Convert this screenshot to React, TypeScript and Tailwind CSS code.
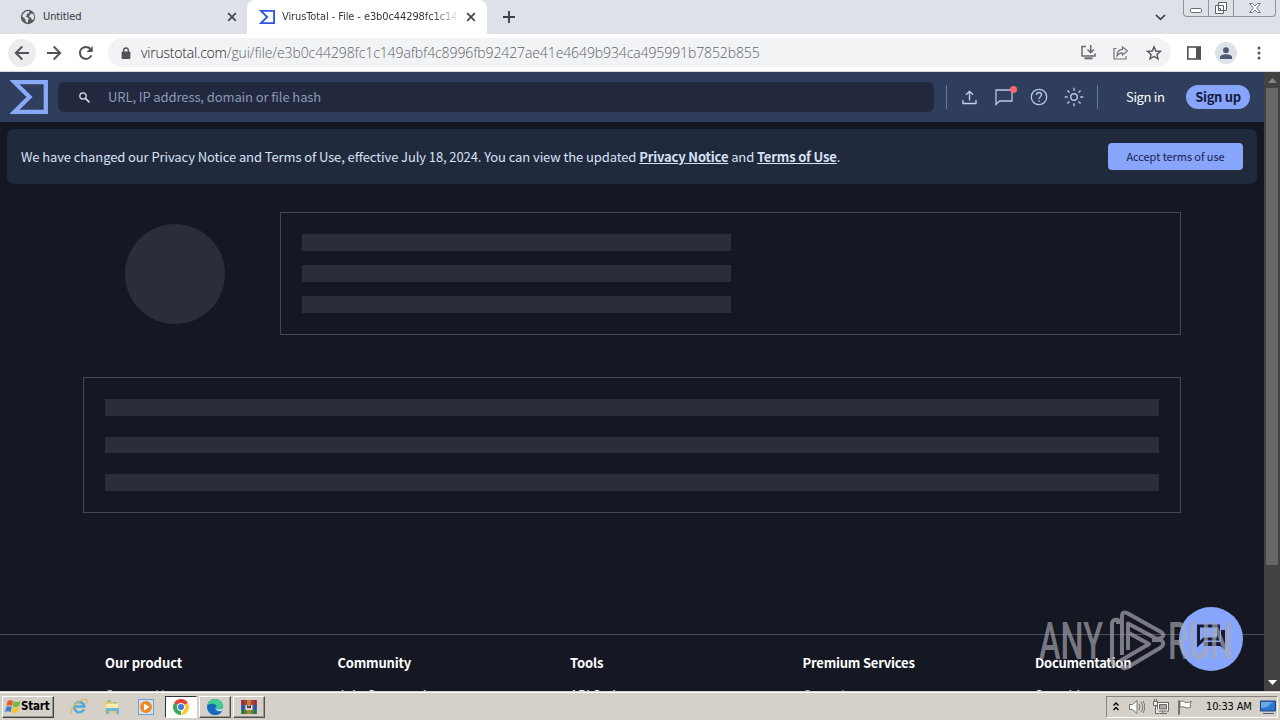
import type { ReactNode } from "react";

const pageFont = "font-['Noto_Sans_CJK_JP','Noto_Sans',sans-serif]";
const uiFont = "font-['DejaVu_Sans_Condensed','DejaVu_Sans',sans-serif]";

function Globe() {
  return (
    <svg className="h-4 w-4" viewBox="0 0 16 16">
      <circle cx="8" cy="8" r="7.2" fill="#55585d" />
      <path d="M3 5 6 2.2 9.5 2 8.8 4.2 6.8 5 7 6.5 5.3 7.2 7.5 8.2 9 9.6 8 11.6 7.6 14 5.6 12.4 5.2 10 2.2 7.6ZM11 4.4l2.4.5.8 2.6-.5 3-1.8.4-.8-2.2-1.8-.6.3-2Z" fill="#dee1e6" />
    </svg>
  );
}

function Cross() {
  return (
    <svg className="h-[10px] w-[10px]" viewBox="0 0 10 10">
      <path d="M1.2 1.2 8.8 8.8M8.8 1.2 1.2 8.8" stroke="#45484d" strokeWidth="1.8" />
    </svg>
  );
}

function Sigma({ className, stroke, width }: { className: string; stroke: string; width: number }) {
  return (
    <svg className={className} viewBox="0 0 38 34" preserveAspectRatio="none">
      <path d="M4.5 2.200H35.800V31.800H4.500L19.500 17Z" fill="none" stroke={stroke} strokeWidth={width} strokeMiterlimit="10" />
    </svg>
  );
}

function TabStrip() {
  return (
    <div className="flex h-[34px] bg-[#dee1e8]">
      <div className="flex w-[247px] items-center pl-5">
        <Globe />
        <span className="ml-[7px] flex-1 pt-px text-[11px] tracking-[-0.1px] text-[#33363b]">Untitled</span>
        <span className="mr-[10px]"><Cross /></span>
      </div>
      <div className="flex h-full w-[240px] items-center rounded-t-lg bg-white pl-3">
        <Sigma className="h-[14px] w-4" stroke="#2f55e4" width={4.4} />
        <span className="ml-[7px] w-[177px] overflow-hidden whitespace-nowrap pt-px text-[11px] tracking-[-0.1px] text-[#33363b] [mask-image:linear-gradient(to_right,#000_150px,transparent_177px)]">
          VirusTotal - File - e3b0c44298fc1c149
        </span>
        <span className="ml-[7px]"><Cross /></span>
      </div>
      <div className="flex items-center pl-4">
        <svg className="h-[12px] w-[12px]" viewBox="0 0 12 12"><path d="M6 0v12M0 6h12" stroke="#3c3f44" strokeWidth="1.9" /></svg>
      </div>
      <div className="ml-auto flex items-center pr-[17px]">
        <svg className="h-[7px] w-[11px]" viewBox="0 0 11 7"><path d="m1 1 4.500 4.400L10 1" fill="none" stroke="#3c3f44" strokeWidth="1.700" /></svg>
      </div>
      <div className="mr-1 flex h-[17px] w-[93px] rounded-b-[4px] border border-t-0 border-[#8e939b]">
        <div className="flex w-[25px] justify-center border-r border-[#8e939b]">
          <svg className="h-4 w-3" viewBox="0 0 12 16"><rect x=".5" y="8.500" width="11" height="4" rx="1" fill="#fff" stroke="#666b73" /></svg>
        </div>
        <div className="flex w-[25px] justify-center border-r border-[#8e939b]">
          <svg className="h-4 w-[14px]" viewBox="0 0 14 16" fill="#fff" stroke="#5e636b">
            <path d="M4.500 2.500h8v8h-8zM1.500 5.500h8v8h-8zM4.500 8.500h2v2h-2z" />
          </svg>
        </div>
        <div className="flex flex-1 justify-center">
          <svg className="h-4 w-3" viewBox="0 0 12 16"><path d="M.7 3.500h3L6 6l2.300-2.500h3L7.700 8l3.600 4.500h-3L6 10l-2.300 2.500h-3L4.300 8Z" fill="#fff" stroke="#666b73" strokeWidth=".9" /></svg>
        </div>
      </div>
    </div>
  );
}

function Toolbar() {
  return (
    <div className="flex h-[38px] items-center border-b border-[#cfd8e4] bg-white pl-2">
      <div className="flex h-7 w-7 items-center justify-center rounded-full bg-[#ececed]">
        <svg className="h-4 w-4" viewBox="0 0 16 16" fill="none" stroke="#505357" strokeWidth="1.9"><path d="M15 8H2M8.300 1.500 1.800 8l6.500 6.500" /></svg>
      </div>
      <svg className="ml-[10px] h-4 w-4" viewBox="0 0 16 16" fill="none" stroke="#505357" strokeWidth="1.9"><path d="M1 8h13M7.700 1.500 14.200 8l-6.500 6.500" /></svg>
      <svg className="ml-4 h-4 w-4" viewBox="0 0 16 16"><path d="M13.400 10.400A6 6 0 1 1 12.500 4" fill="none" stroke="#505357" strokeWidth="2" /><path d="M14.700.9v6.200H8.500Z" fill="#505357" /></svg>
      <div className="ml-[14px] flex h-[29px] w-[1063px] items-center rounded-full bg-[#f1f3f5] pl-[13px]">
        <svg className="h-3 w-[10px]" viewBox="0 0 10 12"><path d="M2.700 5V3.300a2.300 2.300 0 0 1 4.600 0V5" fill="none" stroke="#505357" strokeWidth="1.400" /><rect x=".6" y="4.500" width="8.800" height="7.500" rx="1" fill="#505357" /></svg>
        <span className="ml-[10px] whitespace-nowrap font-['Open_Sans',sans-serif] text-[14px] font-light tracking-[-0.1px] text-[#5f6368]">
          <span className="tracking-[-0.2px] text-[#1f2023]">virustotal.com</span>/gui/file/e3b0c44298fc1c149afbf4c8996fb92427ae41e4649b934ca495991b7852b855
        </span>
        <div className="ml-auto flex items-center gap-[17px] pr-[9px]">
          <svg className="h-[15px] w-[15px]" viewBox="0 0 15 15" fill="none" stroke="#65686d" strokeWidth="1.500"><path d="M5 1.500H1v9.500h13V8.500M9.700 0v7M6.500 4.500l3.200 3.200 3.200-3.200" /><path d="M3.500 13.300h8" strokeWidth="2" /></svg>
          <svg className="h-[15px] w-[16px]" viewBox="0 0 16 15" fill="none" stroke="#707378" strokeWidth="1.200"><path d="M3.500 3.500H1v10.500h12v-3M9.500 2l5 4-5 4V7.800C6.500 7.800 5.200 9 4 11c0-4 2-6.500 5.500-6.700Z" /></svg>
          <svg className="h-4 w-4" viewBox="0 0 16 16" fill="none" stroke="#55585d" strokeWidth="1.400"><path d="m8 1.800 1.800 4.200 4.700.4-3.600 3 1.100 4.500L8 11.500l-4 2.400 1.100-4.500-3.600-3L6.200 6Z" /></svg>
        </div>
      </div>
      <svg className="ml-4 h-[14px] w-[14px]" viewBox="0 0 14 14"><rect x=".8" y="1" width="12.400" height="12" fill="#fff" stroke="#505357" strokeWidth="1.600" /><path d="M9 1h4.500v12H9z" fill="#505357" /></svg>
      <div className="ml-[14px] flex h-[22px] w-[22px] items-center justify-center rounded-full bg-[#dde1e8]">
        <svg className="h-3 w-3" viewBox="0 0 12 12" fill="#4d5a70"><circle cx="6" cy="3.200" r="2.900" /><path d="M0 12V9.800C0 8 4 7.200 6 7.200s6 .8 6 2.600V12Z" /></svg>
      </div>
      <svg className="ml-5 h-[14px] w-[4px]" viewBox="0 0 4 14" fill="#505357"><circle cx="2" cy="2" r="1.500" /><circle cx="2" cy="7" r="1.500" /><circle cx="2" cy="12" r="1.500" /></svg>
    </div>
  );
}

function SiteHeader() {
  return (
    <header className="flex h-[50px] shrink-0 items-center bg-[#2e3e5c] pl-[10px]">
      <Sigma className="h-[34px] w-[38px]" stroke="#8aaaf9" width={4.3} />
      <div className="ml-[10px] flex h-[30px] w-[876px] items-center rounded-[6px] bg-[#22293f] pl-[21px]">
        <svg className="h-[11px] w-[11px]" viewBox="0 0 11 11" fill="none" stroke="#dfe5f0"><circle cx="4" cy="4" r="3.200" strokeWidth="1.200" /><path d="m6.400 6.400 4 4" strokeWidth="1.500" /></svg>
        <span className="ml-[18px] pb-[2px] text-[13px] leading-none tracking-[-0.1px] text-[#8c9ab3]">URL, IP address, domain or file hash</span>
      </div>
      <div className="ml-3 h-6 w-px bg-[#60789f]" />
      <svg className="ml-[15px] h-[15px] w-[15px]" viewBox="0 0 15 15" fill="none" stroke="#c3d2ee" strokeWidth="1.300"><path d="M1 10v3.500h13V10M7.500 10.500V1.500M4 4.800l3.500-3.500L11 4.800" /></svg>
      <div className="relative ml-[18px] h-[18px] w-[18px]">
        <svg className="h-[18px] w-[18px]" viewBox="0 0 18 18" fill="none" stroke="#b6c7e7" strokeWidth="1.300"><path d="M1 16.500V2h16v11H4.500Z" /></svg>
        <span className="absolute -right-[4px] -top-[2px] h-[7px] w-[7px] rounded-full bg-[#ff6673]" />
      </div>
      <svg className="ml-[17px] h-[18px] w-[18px]" viewBox="0 0 18 18" fill="none" stroke="#b6c7e7" strokeWidth="1.300"><circle cx="9" cy="9" r="7.700" /><path d="M6.500 7c0-1.600 1.100-2.500 2.500-2.500s2.500.9 2.500 2.300C11.500 8.600 9 8.800 9 11M9 12.200v1.500" /></svg>
      <svg className="ml-4 h-5 w-5" viewBox="0 0 20 20" fill="none" stroke="#b6c7e7" strokeWidth="1.400"><circle cx="10" cy="10" r="3.300" /><path d="M10 .7v3M10 16.300v3M.7 10h3M16.300 10h3M3.400 3.400l2.100 2.100M14.500 14.500l2.100 2.100M3.400 16.600l2.100-2.100M14.500 5.500l2.100-2.100" /></svg>
      <div className="ml-[13px] h-6 w-px bg-[#60789f]" />
      <span className="ml-7 w-[60px] whitespace-nowrap pb-[2px] text-[13px] leading-none tracking-[-0.35px] text-white">Sign in</span>
      <span className="flex h-6 w-16 items-center justify-center whitespace-nowrap rounded-full bg-[#87a5fb] pb-[2px] text-[13px] font-bold leading-none tracking-[-0.32px] text-[#141b3d]">Sign up</span>
    </header>
  );
}

function Notice() {
  return (
    <div className="mx-[7px] mt-[7px] flex h-[55px] shrink-0 items-center justify-between rounded-[7px] bg-[#21293d] pl-[14px] pr-[14px]">
      <p className="whitespace-nowrap text-[13px] leading-none tracking-[-0.1px] text-[#d6e2f6]">
        We have changed our Privacy Notice and Terms of Use, effective July 18, 2024. You can view the updated{" "}
        <b className="tracking-[-0.16px] underline">Privacy Notice</b> and <b className="tracking-[-0.16px] underline">Terms of Use</b>.
      </p>
      <div className="flex h-[27px] w-[135px] items-center justify-center rounded-[4px] bg-[#87a5fb] text-[11px] leading-none tracking-[-0.07px] text-[#18234d]">Accept terms of use</div>
    </div>
  );
}

function Skeletons() {
  return (
    <>
      <div className="ml-[125px] mt-7 flex h-[123px] shrink-0">
        <div className="mt-3 h-[100px] w-[100px] rounded-full bg-[#2c2d3a]" />
        <div className="ml-[55px] flex w-[901px] flex-col gap-[14px] border border-[#454759] px-[21px] pt-[21px]">
          <div className="h-[17px] w-[429px] bg-[#2c2d3a]" />
          <div className="h-[17px] w-[429px] bg-[#2c2d3a]" />
          <div className="h-[17px] w-[429px] bg-[#2c2d3a]" />
        </div>
      </div>
      <div className="ml-[83px] mt-[42px] flex h-[136px] w-[1098px] shrink-0 flex-col justify-between border border-[#454759] px-[21px] pb-[21px] pt-[21px]">
        <div className="h-[17px] bg-[#2c2d3a]" />
        <div className="h-4 bg-[#2c2d3a]" />
        <div className="h-[17px] bg-[#2c2d3a]" />
      </div>
    </>
  );
}

const columns = [
  ["Our product", "tracking-[-0.05px]", "Contact Us", "text-[#a9bbe8]"],
  ["Community", "tracking-[-0.2px]", "Join Community", "text-[#e6ebf8]"],
  ["Tools", "tracking-[-0.1px]", "API Scripts", "text-[#e6ebf8]"],
  ["Premium Services", "tracking-[-0.2px]", "Get a demo", "text-[#a9a9b8]"],
  ["Documentation", "tracking-[-0.25px]", "Searching", "text-[#e6ebf8]"],
];

function Footer() {
  return (
    <footer className="mt-[121px] grid h-[58px] shrink-0 grid-cols-[repeat(5,232.500px)] overflow-hidden border-t border-[#4a4c5c] pl-[105px] pt-[18px]">
      {columns.map(([title, spacing, link, color]) => (
        <div key={title} className="text-[13px] leading-[20px]">
          <div className={"whitespace-nowrap font-bold text-white " + spacing}>{title}</div>
          <div className={"mt-3 whitespace-nowrap " + color}>{link}</div>
        </div>
      ))}
    </footer>
  );
}

function Watermark() {
  return (
    <svg className="absolute left-[1036px] top-[604px] h-[72px] w-[200px]" viewBox="0 0 200 72">
      <g fill="#a9aab1" fillOpacity=".68" fontFamily="Roboto, sans-serif" fontSize="51" fontWeight="500">
        <text x="3" y="55" textLength="64" lengthAdjust="spacingAndGlyphs">ANY</text>
        <text x="132" y="55" textLength="65" lengthAdjust="spacingAndGlyphs">RUN</text>
      </g>
      <path
        d="M82 20V16q-5-1-6 3V56q0 4 4 6M86 51V12q0-5 5-3L125 28q5 3 0 6L121 35 92 19.500V46M84 57 113 40 91 28M116 36 125 36q5 4-1 8L92 63q-5 3-7-2"
        fill="none" stroke="#a9aab1" strokeOpacity=".68" strokeWidth="4" strokeLinejoin="round"
      />
    </svg>
  );
}

function Site() {
  return (
    <div className={"relative flex h-[620px] overflow-hidden bg-[#151722] " + pageFont}>
      <main className="flex w-[1264px] flex-col">
        <SiteHeader />
        <Notice />
        <Skeletons />
        <Footer />
      </main>
      <div className="flex w-4 flex-col items-center bg-[#424242]">
        <svg className="mt-[6px] h-[5px] w-[9px]" viewBox="0 0 9 5"><path d="M0 5 4.500 0 9 5Z" fill="#858585" /></svg>
        <div className="mt-[5px] h-[477px] w-3 bg-[#686868]" />
        <svg className="mb-[7px] mt-auto h-[5px] w-[9px]" viewBox="0 0 9 5"><path d="m0 0 4.500 5L9 0Z" fill="#fff" /></svg>
      </div>
    </div>
  );
}

function Chat() {
  return (
    <div className="absolute left-[1179px] top-[607px] flex h-16 w-16 items-center justify-center rounded-full bg-[#87a5fb]">
      <svg className="h-8 w-8" viewBox="0 0 32 32"><path d="M3.500 3h20v13H9l-5.500 5Z" fill="none" stroke="#171c34" strokeWidth="3" /><path d="M26 7h4v20l-5-4H9v-4h17Z" fill="#171c34" /></svg>
    </div>
  );
}

function TaskButton({ active, children }: { active?: boolean; children: ReactNode }) {
  return (
    <div className={"flex h-[22px] w-8 items-center justify-center border " + (active ? "border-b-white border-l-[#303030] border-r-white border-t-[#303030] bg-white" : "border-b-[#505050] border-l-white border-r-[#505050] border-t-white bg-[#d6d0c9] shadow-[inset_-1px_-1px_#989590]")}>
      {children}
    </div>
  );
}

function Taskbar() {
  return (
    <div className={"relative flex h-[28px] items-center border-t border-white bg-[#d5d0c8] pb-px pl-[2px] pt-px shadow-[0_-1px_#d5d0c8] " + uiFont}>
      <div className="flex h-[22px] w-[52px] items-center border border-b-[#404040] border-l-white border-r-[#404040] border-t-white pl-[2px] shadow-[inset_-1px_-1px_#989590]">
        <svg className="h-[15px] w-4" viewBox="0 0 16 15">
          <path d="M2.500 2Q5 .3 8 2L7 7Q4 5.300 1.500 7Z" fill="#e65a2b" />
          <path d="M8.800 2.300Q12 4 15.500 2l-1.300 5Q11 9 7.700 7.300Z" fill="#72b845" />
          <path d="M1.200 8Q4 6.300 6.800 8l-1 5Q3 11.300.1 13Z" fill="#3b83d1" />
          <path d="M7.500 8.300Q11 10 14 8l-1.300 5q-3.200 2-6.200.3Z" fill="#f5c52e" />
        </svg>
        <span className="text-[11.500px] font-bold leading-none tracking-[-0.2px] text-black">Start</span>
      </div>
      <svg className="ml-4 h-[17px] w-[18px]" viewBox="0 0 18 17" fill="none">
        <path d="M14 11.500A5.200 5.200 0 1 1 14.500 8.500H5" stroke="#4faadb" strokeWidth="2.400" />
        <path d="M2 15.500C-2 13 8 1.500 15 1.300c3 0 2 2.700 1 4" stroke="#e2bb52" strokeWidth="1.300" />
      </svg>
      <svg className="ml-4 h-4 w-4" viewBox="0 0 16 16">
        <path d="M1 3h5l1 1.500h7V14H1Z" fill="#e9c866" /><path d="M2 5h12v5H2Z" fill="#fbecac" /><path d="M2 9h13v6h-3v-3H5v3H2Z" fill="#6fb6dc" /><path d="M3 1.500h4V3H3zM9 3h4v1H9z" fill="#7fbf79" />
      </svg>
      <svg className="ml-[18px] h-4 w-4" viewBox="0 0 16 16">
        <rect x=".5" y=".5" width="15" height="15" fill="#cfe3f4" stroke="#6da2d2" /><circle cx="8" cy="8" r="6" fill="#ef8a22" /><path d="M6 4.500v7L11.500 8Z" fill="#fff" />
      </svg>
      <div className="ml-[11px] flex gap-[2px]">
        <TaskButton active>
          <svg className="h-4 w-4" viewBox="0 0 16 16">
            <path d="M8 8 1.070 4A8 8 0 0 1 14.930 4Z" fill="#df4536" /><path d="M8 8V16A8 8 0 0 1 1.070 4Z" fill="#3aa757" /><path d="M8 8l6.930-4A8 8 0 0 1 8 16l3.400-6Z" fill="#f9cb35" /><circle cx="8" cy="8" r="4" fill="#fff" /><circle cx="8" cy="8" r="3" fill="#4079dd" />
          </svg>
        </TaskButton>
        <TaskButton>
          <svg className="h-4 w-4" viewBox="0 0 16 16">
            <circle cx="8" cy="8" r="8" fill="#1b79cc" /><path d="M0 7C1 2 4 0 8 0c5 0 8 3 8 6.500C16 9 14 10.500 11 10.500c-2 0-2.500-1-1.500-2C10 5 4 3 0 7Z" fill="#45cc91" /><path d="M0 7C4 3 9 5 9.500 7.500 7 7 6 10 8 12s5 2 7 .5C12 17 6 17 3 14 1 12-.1 9 0 7Z" fill="#1769bd" /><path d="M9.500 7.500c-1.500 1-1 4 2.500 4.500 2 .3 3-.5 3.500-1l.500-2c-1 1-3 1.500-5 1.500-2 0-2.500-1-1.500-3Z" fill="#e7edf0" />
          </svg>
        </TaskButton>
        <TaskButton>
          <svg className="h-4 w-4" viewBox="0 0 16 16">
            <path d="M0 1h16v5H0z" fill="#b03a40" /><path d="M0 6h16v5H0z" fill="#375fba" /><path d="M0 11h16v4H0z" fill="#3d8b46" /><path d="M6 1h4v14H6z" fill="#b98331" /><path d="M4.500 6h7v5h-7z" fill="#eee4ce" /><path d="M6.500 6v3h1V7h1v2h1V6" fill="none" stroke="#55442e" /><path d="M2 1v14M14 1v14" stroke="#1c2844" strokeOpacity=".5" />
          </svg>
        </TaskButton>
      </div>
      <div className="ml-auto mr-[2px] flex h-[22px] w-[172px] items-center border border-b-white border-l-[#85827d] border-r-white border-t-[#85827d] pl-[6px]">
        <svg className="h-[9px] w-[6px]" viewBox="0 0 6 9" fill="none" stroke="#000" strokeWidth="1.300"><path d="m.5 3.500 2.500-2.500 2.500 2.500M.5 8 3 5.500 5.500 8" /></svg>
        <svg className="ml-[10px] h-4 w-4" viewBox="0 0 16 16" stroke="#77746f" fill="none"><path d="M.5 5.500h3L8 1.500v13l-4.500-4h-3Z" fill="#fff" /><path d="M10 5q2 3 0 6M12 3q3.500 5 0 10M14 2q3.500 6 0 12" /></svg>
        <svg className="ml-2 h-4 w-4" viewBox="0 0 16 16" stroke="#6b6864"><rect x="4.500" y="3.500" width="11" height="8.500" fill="#fff" /><path d="M6.500 5.500h7v4.500h-7z" fill="#aaa8a4" /><path d="M7 14.500h7M10 12v2" /><path d="M.5 2.500h4v4h-4zM2.500 6.500V14.500h4M1.500 0v2M3.500 0v2" fill="#eee" /></svg>
        <svg className="ml-2 h-4 w-4" viewBox="0 0 16 16" stroke="#77746f" fill="#fff"><path d="M1.500 15.500V1.500h1v14ZM3 2.500c3-1 4 0 5 .7 2 1 4 0 6.500-.7l-1.500 3 1 2.500c-3 1.500-5 1-6 .3S5 7.500 3 8.500Z" /></svg>
        <span className="ml-[13px] whitespace-nowrap text-[11px] leading-none tracking-[-0.15px] text-black">10:33 AM</span>
        <svg className="ml-2 h-4 w-4 shrink-0" viewBox="0 0 16 16"><path d="M.5 2h15v10H.5Z" fill="#2e75cd" stroke="#1a3e82" /><path d="M1 3h12L7 8 1 9Z" fill="#69a9e9" /><path d="M3 14h11v1H3z" fill="#4a5f80" /></svg>
      </div>
    </div>
  );
}

export default function App() {
  return (
    <div className="relative h-[720px] w-[1280px] overflow-hidden">
      <div className={uiFont}>
        <TabStrip />
        <Toolbar />
      </div>
      <Site />
      <Chat />
      <Watermark />
      <Taskbar />
    </div>
  );
}
